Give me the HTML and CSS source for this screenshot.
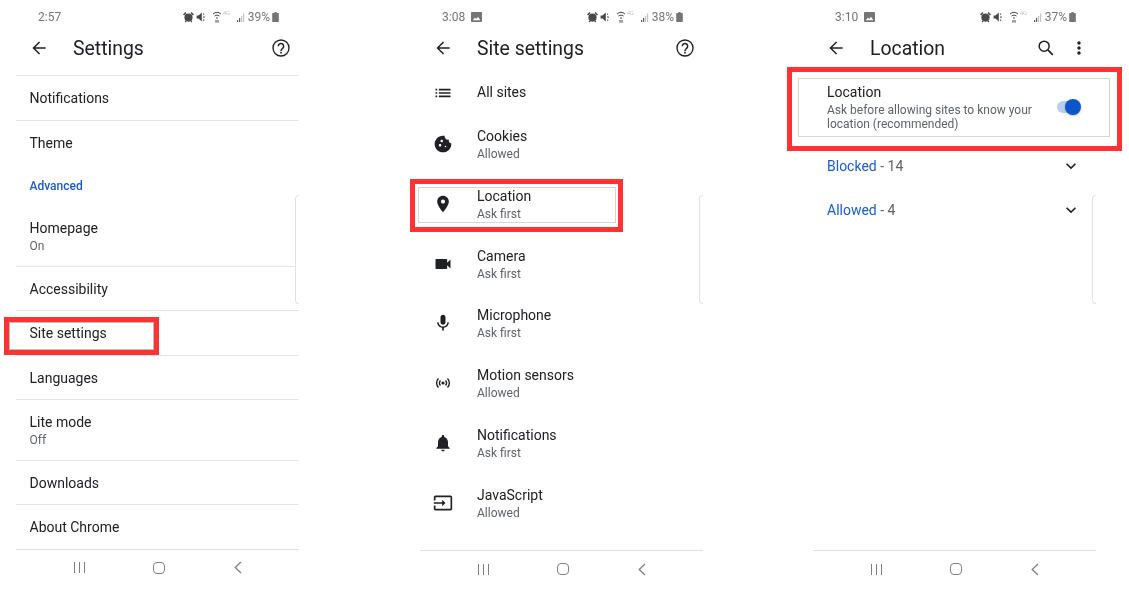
FILE: index.html
```html
<!DOCTYPE html>
<html lang="en">
<head>
<meta charset="utf-8">
<title>Chrome location settings</title>
<link rel="stylesheet" href="styles.css">
</head>
<body>
<svg class="defs" width="0" height="0" aria-hidden="true">
  <symbol id="i-back" viewBox="0 0 24 24"><path fill="none" stroke="currentColor" stroke-width="1.8" d="M20 12H5.5M12.7 4.7L5.4 12l7.3 7.3"/></symbol>
  <symbol id="i-help" viewBox="0 0 24 24"><circle cx="12" cy="12" r="9.6" fill="none" stroke="currentColor" stroke-width="1.6"/><path fill="none" stroke="currentColor" stroke-width="1.8" d="M8.8 9.8a3.2 3.2 0 1 1 5.4 2.3c-1.1 1-2.2 1.6-2.2 3.4"/><rect x="11" y="16.6" width="2" height="2"/></symbol>
  <symbol id="i-list" viewBox="0 0 24 24"><path d="M3 13h2v-2H3v2zm0 4h2v-2H3v2zm0-8h2V7H3v2zm4 4h14v-2H7v2zm0 4h14v-2H7v2zM7 7v2h14V7H7z"/></symbol>
  <symbol id="i-cookie" viewBox="0 0 24 24"><path d="M21.95 10.99c-1.79-.03-3.7-1.95-2.68-4.22-2.97 1-5.78-1.59-5.19-4.56C7.11.74 2 6.41 2 12c0 5.52 4.48 10 10 10 5.89 0 10.54-5.08 9.95-11.01zM8.5 15c-.83 0-1.5-.67-1.5-1.5S7.67 12 8.5 12s1.5.67 1.5 1.5S9.33 15 8.5 15zm2-5C9.67 10 9 9.33 9 8.5S9.67 7 10.5 7s1.5.67 1.5 1.5-.67 1.5-1.5 1.5zm4.5 6c-.55 0-1-.45-1-1s.45-1 1-1 1 .45 1 1-.45 1-1 1z"/></symbol>
  <symbol id="i-place" viewBox="0 0 24 24"><path d="M12 2C8.13 2 5 5.13 5 9c0 5.25 7 13 7 13s7-7.75 7-13c0-3.87-3.13-7-7-7zm0 9.5c-1.38 0-2.5-1.12-2.5-2.5s1.12-2.5 2.5-2.5 2.5 1.12 2.5 2.5-1.12 2.5-2.5 2.5z"/></symbol>
  <symbol id="i-video" viewBox="0 0 24 24"><path d="M17 10.5V7c0-.55-.45-1-1-1H4c-.55 0-1 .45-1 1v10c0 .55.45 1 1 1h12c.55 0 1-.45 1-1v-3.5l4 4v-11l-4 4z"/></symbol>
  <symbol id="i-mic" viewBox="0 0 24 24"><path d="M12 14c1.66 0 2.99-1.34 2.99-3L15 5c0-1.66-1.34-3-3-3S9 3.34 9 5v6c0 1.66 1.34 3 3 3zm5.3-3c0 3-2.54 5.1-5.3 5.1S6.7 14 6.7 11H5c0 3.41 2.72 6.23 6 6.72V21h2v-3.28c3.28-.48 6-3.3 6-6.72h-1.7z"/></symbol>
  <symbol id="i-sensors" viewBox="0 0 24 24"><circle cx="12" cy="12" r="1.9"/><path fill="none" stroke="currentColor" stroke-width="1.7" d="M9 9a4.2 4.2 0 0 0 0 6M15 9a4.2 4.2 0 0 1 0 6M6.6 6.6a7.6 7.6 0 0 0 0 10.8M17.4 6.6a7.6 7.6 0 0 1 0 10.8"/></symbol>
  <symbol id="i-bell" viewBox="0 0 24 24"><path d="M12 22c1.1 0 2-.9 2-2h-4c0 1.1.89 2 2 2zm6-6v-5c0-3.07-1.64-5.64-4.5-6.32V4c0-.83-.67-1.5-1.5-1.5s-1.5.67-1.5 1.5v.68C7.63 5.36 6 7.92 6 11v5l-2 2v1h16v-1l-2-2z"/></symbol>
  <symbol id="i-input" viewBox="0 0 24 24"><path d="M21 3.01H3c-1.1 0-2 .9-2 2V9h2V4.99h18v14.03H3V15H1v4.01c0 1.1.9 1.98 2 1.98h18c1.1 0 2-.88 2-1.98v-14c0-1.11-.9-2-2-2zM11 16l4-4-4-4v3H1v2h10v3z"/></symbol>
  <symbol id="i-search" viewBox="0 0 24 24"><circle cx="9.8" cy="9.8" r="6" fill="none" stroke="currentColor" stroke-width="1.8"/><path fill="none" stroke="currentColor" stroke-width="2" d="M14.2 14.2l6 6"/></symbol>
  <symbol id="i-more" viewBox="0 0 24 24"><path d="M12 8c1.1 0 2-.9 2-2s-.9-2-2-2-2 .9-2 2 .9 2 2 2zm0 2c-1.1 0-2 .9-2 2s.9 2 2 2 2-.9 2-2-.9-2-2-2zm0 6c-1.1 0-2 .9-2 2s.9 2 2 2 2-.9 2-2-.9-2-2-2z"/></symbol>
  <symbol id="i-down" viewBox="0 0 24 24"><path d="M16.59 8.59L12 13.17 7.41 8.59 6 10l6 6 6-6z"/></symbol>
  <symbol id="i-status-left" viewBox="0 0 39 12">
    <circle cx="5.5" cy="6.6" r="4.1"/><path d="M0 3.4l2.4-2.5 1.1 1-2.4 2.5zM11 3.4L8.6.9l-1.1 1 2.4 2.5zM1.6 10.4l1.2-1 1 .7-1.2 1.4zM9.4 10.4l-1.2-1-1 .7 1.2 1.4z"/>
    <path d="M13.6 4.4h1.9l3.3-2.9v9l-3.3-2.9h-1.9zM20 2l1.4 1.2-1 1zM20.2 5.6h1.6v1.1h-1.6zM20.4 8l1.2 1-1.4 1.4z"/>
    <path fill="none" stroke="currentColor" stroke-width="1" d="M30 3a6.2 6.2 0 0 1 8 0M31.5 5a4 4 0 0 1 5 0"/>
    <path d="M33 7l1-1 1 1-1 1zM32.5 9h1v2.8h-1zM34.5 9h1v2.8h-1z"/>
  </symbol>
  <symbol id="i-signal" viewBox="0 0 10 12"><path d="M1 9h1.2v2H1zM3 7h1.2v4H3z"/><path class="status-faint" d="M5 5h1.2v6H5zM7 2.5h1.2V11H7z"/></symbol>
  <symbol id="i-battery" viewBox="0 0 7 10"><path d="M2.4 0h2.2v1H6.2c.3 0 .6.3.6.6V9.4c0 .3-.3.6-.6.6H.8C.5 10 .2 9.7.2 9.4V1.6C.2 1.3.5 1 .8 1h1.6z"/></symbol>
  <symbol id="i-image" viewBox="0 0 11 10"><path d="M1 0h9c.5 0 1 .5 1 1v8c0 .5-.5 1-1 1H1c-.5 0-1-.5-1-1V1c0-.5.5-1 1-1zm.8 8.2h7.5L7 4.8 5.2 7 4 5.6z"/></symbol>
  <symbol id="i-navback" viewBox="0 0 8 13"><path fill="none" stroke="currentColor" stroke-width="1.3" d="M7 1L1.2 6.5 7 12"/></symbol>
</svg>

<main class="page">
  <section class="phone">
    <div class="status">
      <span class="time">2:57</span>
      <span class="status-right"><svg class="status-left"><use href="#i-status-left"/></svg><span class="net">4G</span><svg class="signal"><use href="#i-signal"/></svg><span>39%</span><svg class="battery"><use href="#i-battery"/></svg></span>
    </div>
    <header class="toolbar">
      <svg class="icon"><use href="#i-back"/></svg>
      <h1 class="title">Settings</h1>
      <svg class="icon tool-help"><use href="#i-help"/></svg>
    </header>
    <div class="content content-lined">
      <div class="row line"><div class="label">Notifications</div></div>
      <div class="row"><div class="label">Theme</div></div>
      <div class="section-head">Advanced</div>
      <div class="row two line"><div><div class="label">Homepage</div><div class="sub">On</div></div></div>
      <div class="row line"><div class="label">Accessibility</div></div>
      <div class="row line"><div class="label">Site settings</div></div>
      <div class="row line"><div class="label">Languages</div></div>
      <div class="row two line"><div><div class="label">Lite mode</div><div class="sub">Off</div></div></div>
      <div class="row line"><div class="label">Downloads</div></div>
      <div class="row end"><div class="label">About Chrome</div></div>
    </div>
    <nav class="nav"><span class="nav-recent"><i></i><i></i><i></i></span><span class="nav-home"></span><svg class="nav-back"><use href="#i-navback"/></svg></nav>
    <div class="scroll-edge"></div>
    <div class="mark mark-a"><div class="mark-inner"></div></div>
  </section>

  <section class="phone phone-b">
    <div class="status">
      <span class="time">3:08</span><svg class="status-image"><use href="#i-image"/></svg>
      <span class="status-right"><svg class="status-left"><use href="#i-status-left"/></svg><span class="net">4G</span><svg class="signal"><use href="#i-signal"/></svg><span>38%</span><svg class="battery"><use href="#i-battery"/></svg></span>
    </div>
    <header class="toolbar">
      <svg class="icon"><use href="#i-back"/></svg>
      <h1 class="title">Site settings</h1>
      <svg class="icon tool-help"><use href="#i-help"/></svg>
    </header>
    <div class="content content-long">
      <div class="site first"><svg class="icon"><use href="#i-list"/></svg><div class="label">All sites</div></div>
      <div class="site"><svg class="icon"><use href="#i-cookie"/></svg><div><div class="label">Cookies</div><div class="sub">Allowed</div></div></div>
      <div class="site"><svg class="icon"><use href="#i-place"/></svg><div><div class="label">Location</div><div class="sub">Ask first</div></div></div>
      <div class="site"><svg class="icon"><use href="#i-video"/></svg><div><div class="label">Camera</div><div class="sub">Ask first</div></div></div>
      <div class="site"><svg class="icon"><use href="#i-mic"/></svg><div><div class="label">Microphone</div><div class="sub">Ask first</div></div></div>
      <div class="site"><svg class="icon"><use href="#i-sensors"/></svg><div><div class="label">Motion sensors</div><div class="sub">Allowed</div></div></div>
      <div class="site"><svg class="icon"><use href="#i-bell"/></svg><div><div class="label">Notifications</div><div class="sub">Ask first</div></div></div>
      <div class="site"><svg class="icon"><use href="#i-input"/></svg><div><div class="label">JavaScript</div><div class="sub">Allowed</div></div></div>
      <div class="site cut"><svg class="icon"></svg><div class="label">Pop-ups and redirects</div></div>
    </div>
    <nav class="nav nav-short"><span class="nav-recent"><i></i><i></i><i></i></span><span class="nav-home"></span><svg class="nav-back"><use href="#i-navback"/></svg></nav>
    <div class="scroll-edge"></div>
    <div class="mark mark-b"><div class="mark-inner"></div></div>
  </section>

  <section class="phone phone-c">
    <div class="status">
      <span class="time">3:10</span><svg class="status-image"><use href="#i-image"/></svg>
      <span class="status-right"><svg class="status-left"><use href="#i-status-left"/></svg><span class="net">4G</span><svg class="signal"><use href="#i-signal"/></svg><span>37%</span><svg class="battery"><use href="#i-battery"/></svg></span>
    </div>
    <header class="toolbar">
      <svg class="icon"><use href="#i-back"/></svg>
      <h1 class="title">Location</h1>
      <svg class="icon tool-search"><use href="#i-search"/></svg>
      <svg class="icon tool-more"><use href="#i-more"/></svg>
    </header>
    <div class="content content-long">
      <div class="toggle-row">
        <div class="toggle-text">
          <div class="label">Location</div>
          <div class="sub tight">Ask before allowing sites to know your location (recommended)</div>
        </div>
        <span class="switch"><span class="knob"></span></span>
      </div>
      <div class="group"><span class="group-name"><b>Blocked</b> - 14</span><svg class="icon chev"><use href="#i-down"/></svg></div>
      <div class="group"><span class="group-name"><b>Allowed</b> - 4</span><svg class="icon chev"><use href="#i-down"/></svg></div>
    </div>
    <nav class="nav nav-short"><span class="nav-recent"><i></i><i></i><i></i></span><span class="nav-home"></span><svg class="nav-back"><use href="#i-navback"/></svg></nav>
    <div class="scroll-edge"></div>
    <div class="mark mark-c"><div class="mark-inner"></div></div>
  </section>
</main>
</body>
</html>
```

FILE: styles.css
```css
* { box-sizing: border-box; }
html, body { margin: 0; padding: 0; background: #fff; }
body { width: 1129px; height: 596px; overflow: hidden; font-family: Roboto, "Liberation Sans", sans-serif; color: #202124; }
.defs { position: absolute; }

.page { display: flex; padding-left: 16px; height: 596px; filter: blur(0.3px); }
.phone { position: relative; flex: none; width: 283px; height: 596px; display: flex; flex-direction: column; }
.phone-b { margin-left: 121px; }
.phone-c { margin-left: 110px; }

.status { height: 34px; flex: none; display: flex; align-items: center; padding: 0 20px 0 22px; font-size: 12px; color: #757575; }
.status-image { width: 11px; height: 10px; margin-left: 6px; fill: #757575; }
.status-right { margin-left: auto; display: flex; align-items: center; }
.status-left { width: 39px; height: 12px; fill: #484848; color: #484848; }
.net { width: 13px; margin-left: 1px; font-size: 6px; line-height: 6px; color: #c4c4c4; align-self: flex-start; }
.signal { width: 10px; height: 12px; margin-right: 2px; fill: #5c5c5c; }
.status-faint { fill: #c4c4c4; }
.battery { width: 7px; height: 10px; margin-left: 2px; fill: #757575; }

.toolbar { height: 41px; flex: none; display: flex; align-items: center; padding: 0 8px 13px 13px; }
.icon { width: 20px; height: 20px; flex: none; fill: #202124; color: #202124; }
.title { margin: 2px 0 0 24px; font-size: 19.4px; font-weight: 400; line-height: 28px; color: #202124; }
.tool-help { margin-left: auto; }
.tool-search { margin-left: auto; }
.tool-more { margin-left: 13px; margin-right: -1px; }

.content { height: 474px; flex: none; overflow: hidden; }
.content-long { height: 475px; }
.content-lined { border-top: 1px solid #e4e4e4; }

.label { font-size: 14px; line-height: 17px; color: #202124; }
.sub { font-size: 12px; line-height: 17px; margin-top: 1px; color: #5f6368; }
.sub.tight { line-height: 14px; margin-top: 2px; }

.row { height: 44.5px; display: flex; align-items: center; padding: 2px 0 0 13.5px; }
.row.two { height: 60.5px; padding-top: 3px; }
.row.end { padding-top: 0; }
.line { border-bottom: 1px solid #e4e4e4; }
.section-head { height: 41px; padding: 13px 0 0 13.5px; font-size: 12px; line-height: 16px; font-weight: 500; color: #1a5cc8; }

.site { height: 59.85px; display: flex; align-items: center; gap: 24px; padding: 3px 0 0 13px; }
.site .icon { margin-top: -3px; }
.site.first { height: 39px; padding: 0 0 4px 13px; }
.site.first .icon { margin-top: 0; }
.site.cut { align-items: flex-start; margin-top: -1px; padding-top: 16px; }

.toggle-row { height: 69px; display: flex; align-items: flex-start; padding: 9px 0 0 14px; }
.toggle-text { width: 226px; }
.switch { position: relative; width: 23px; height: 12px; margin: 17px 0 0 4px; border-radius: 6px; background: #b9cdf0; }
.knob { position: absolute; right: -1px; top: -2px; width: 16px; height: 16px; border-radius: 50%; background: #0b57c9; box-shadow: 0 1px 2px rgba(0,0,0,.25); }

.group { height: 44px; display: flex; align-items: center; justify-content: space-between; padding: 0 14px; }
.group-name { font-size: 14px; color: #5f6368; }
.group-name b { font-weight: 400; color: #1a5cc8; }
.chev { margin-right: 1px; }

.nav { height: 47px; flex: none; border-top: 1px solid #e0e0e0; display: flex; align-items: center; padding: 0 0 11px 58px; }
.nav-short { height: 46px; padding-bottom: 9px; }
.nav-recent { display: flex; gap: 3.5px; width: 12px; height: 11px; margin-right: 67px; }
.nav-recent i { width: 1.4px; height: 11px; background: #808080; }
.nav-home { width: 12px; height: 12px; border: 1.4px solid #808080; border-radius: 4px; margin-right: 69px; }
.nav-back { width: 8px; height: 13px; color: #808080; }

.scroll-edge { position: absolute; right: 0; top: 195px; width: 4px; height: 109px; border: 1px solid #e2e2e2; border-right: 0; border-radius: 5px 0 0 5px; background: #fff; }

.mark { position: absolute; border: 5px solid #ff3333; }
.mark-inner { width: 100%; height: 100%; border: 1px solid #d6d6d6; }
.mark-a { left: -12px; top: 317px; width: 155px; height: 38px; border-width: 5.5px; }
.mark-a .mark-inner { border: 1.5px solid #bdbdbd; }
.mark-b { left: -10px; top: 179px; width: 213px; height: 53px; padding: 3px 2px 4px 3px; }
.mark-c { left: -26px; top: 67px; width: 335px; height: 84px; padding: 6px 7px 9px 6px; }
```
